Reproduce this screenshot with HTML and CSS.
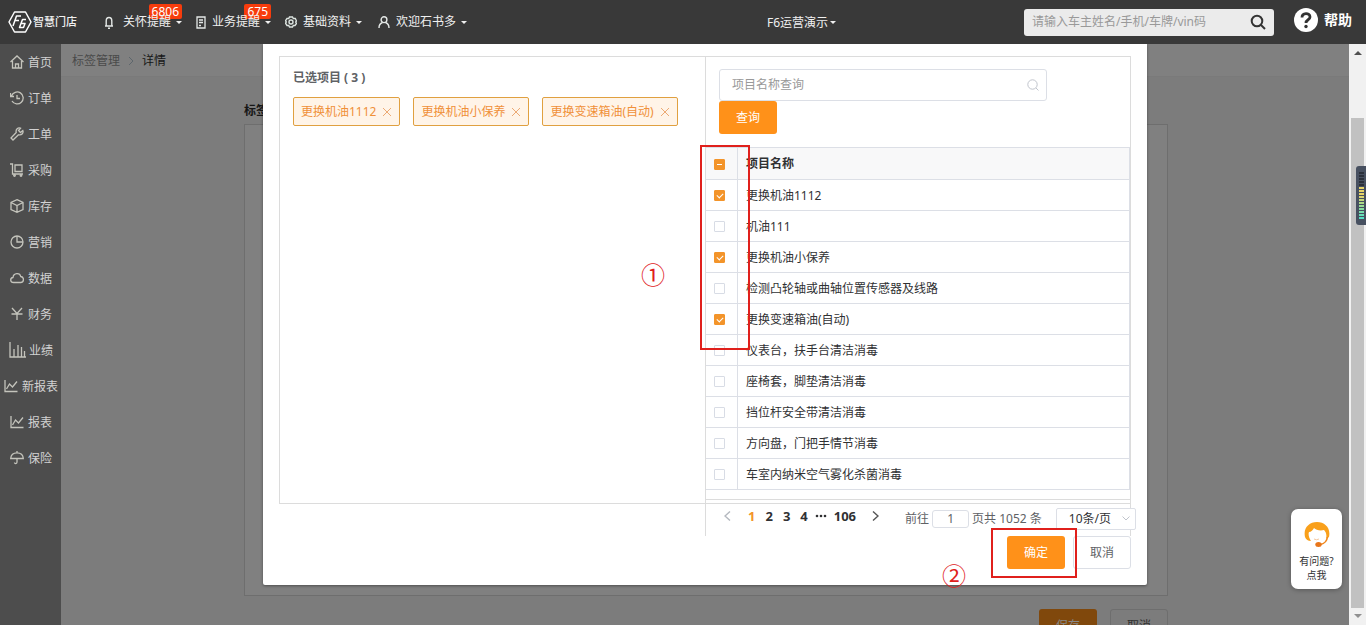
FILE: index.html
```html
<!DOCTYPE html>
<html lang="zh-CN">
<head>
<meta charset="utf-8">
<title>智慧门店</title>
<link rel="stylesheet" href="styles.css">
</head>
<body>
<header class="topbar">
  <a class="logo" href="#">
    <svg width="24" height="22" viewBox="0 0 24 22" fill="none" stroke="#fff" stroke-width="1.500" stroke-linejoin="round"><path d="M6.500 1h11L23 11l-5.500 10h-11L1 11z"/><path d="M13 5H8.500L5 15M7 9.500h4M18 8.500h-3.500L11.500 16.500h4l1.500-4h-4"/></svg>
    <span>智慧门店</span>
  </a>
  <nav class="menu">
    <a class="menu-item" href="#"><svg class="bell" width="10" height="13" viewBox="0 0 10 13" fill="none" stroke="#e4e8e6" stroke-width="1.400"><path d="M1 10h8M2.200 10V5c0-2 1-3.500 2.800-3.500S7.800 3 7.800 5v5M4 12.200h2"/></svg><span class="menu-text">关怀提醒</span><i class="caret"></i><b class="badge">6806</b></a>
    <a class="menu-item" href="#"><svg width="10" height="13" viewBox="0 0 10 13" fill="none" stroke="#e4e8e6" stroke-width="1.300"><path d="M1 1h8v11H1zM3 4h4M3 6.500h4M3 9.500h2"/></svg><span class="menu-text">业务提醒</span><i class="caret"></i><b class="badge">675</b></a>
    <a class="menu-item" href="#"><svg width="12" height="12" viewBox="0 0 12 12" fill="none" stroke="#dce4e0" stroke-width="1.400"><path d="M4.500 1h3l.800 1.500h2L11.500 5l-.800 1 .800 1.500-1.500 2H8.300L7.500 11h-3l-.800-1.500H2L.500 7.200 1.300 6 .500 4.700 2 2.500h1.700z"/><circle cx="6" cy="6" r="2"/></svg><span class="menu-text">基础资料</span><i class="caret"></i></a>
    <a class="menu-item" href="#"><svg width="14" height="12" viewBox="0 0 14 12" fill="none" stroke="#e4e8e6" stroke-width="1.400"><circle cx="8" cy="3.700" r="2.900"/><path d="M3 12c0-3 1.500-4.800 3.500-5.500M13 12c0-3-1.500-4.800-3.500-5.500"/></svg><span class="menu-text">欢迎石书多</span><i class="caret"></i></a>
  </nav>
  <a class="store" href="#">F6运营演示<i class="caret"></i></a>
  <form class="search">
    <input type="text" aria-label="搜索" placeholder="请输入车主姓名/手机/车牌/vin码">
    <button type="button" aria-label="搜索"><svg width="16" height="16" viewBox="0 0 16 16" fill="none" stroke="#333" stroke-width="2"><circle cx="7" cy="7" r="5.300"/><path d="M11 11l4 4"/></svg></button>
  </form>
  <a class="help" href="#"><svg width="24" height="24" viewBox="0 0 24 24"><circle cx="12" cy="12" r="12" fill="#fff"/><path d="M8 9.500c0-5 8-5 8-.500 0 3-4 2.500-4 6" fill="none" stroke="#333" stroke-width="2.800"/><circle cx="12" cy="18.500" r="1.700" fill="#333"/></svg><span>帮助</span></a>
</header>

<div class="layout">
  <nav class="sidebar">
    <a href="#"><svg viewBox="0 0 14 14"><path d="M.500 7L7 1l6.500 6M2.500 6v7h9V6M5.500 13V9h3v4"/></svg>首页</a>
    <a href="#"><svg viewBox="0 0 14 14"><path d="M1.500 5A6 6 0 1 1 2 10M.500 2v3.500H4M7 4v3.500h3"/></svg>订单</a>
    <a href="#"><svg viewBox="0 0 14 14"><path d="M12.800 3.500L10.500 5.500 8.500 3.500l2-2.300C8 .300 5.500 2 6.200 5.500L1 11l2 2 5.500-5.200c3.500.700 5.200-2 4.300-4.300z"/></svg>工单</a>
    <a href="#"><svg viewBox="0 0 14 14"><path d="M0 1h2.500v10H13M5 2h7v6.500H5z"/><circle cx="4.500" cy="12.500" r=".800"/><circle cx="11" cy="12.500" r=".800"/></svg>采购</a>
    <a href="#"><svg viewBox="0 0 14 14"><path d="M7 .700l6 2.800v7L7 13.300 1 10.500v-7zM1 3.500l6 3 6-3M7 6.500v7"/></svg>库存</a>
    <a href="#"><svg viewBox="0 0 14 14"><circle cx="7" cy="7" r="6"/><path d="M7 1v6h6"/></svg>营销</a>
    <a href="#"><svg viewBox="0 0 14 14"><path d="M3.500 11.500C0 11.500-.200 7 3 6.500 3.500 1.500 10 1.500 10.700 5.500c3.800.300 3.500 6 0 6z"/></svg>数据</a>
    <a href="#"><svg viewBox="0 0 14 14"><path d="M2 1l5 5.500L12 1M1.500 7h11M7 6.500V13"/></svg>财务</a>
    <a href="#"><svg class="wide" viewBox="0 0 17 16"><path d="M1 0v15h16M5 7v8M9 3v12M12.500 5v10M15.500 9v6"/></svg>业绩</a>
    <a href="#"><svg viewBox="0 0 14 14"><path d="M1 1v11.500h12.500M2.500 10L5.500 5l3 3L13 2.500"/></svg>新报表</a>
    <a href="#"><svg viewBox="0 0 14 14"><path d="M1 1v11.500h12.500M2.500 10L5.500 5l3 3L13 2.500"/></svg>报表</a>
    <a href="#"><svg viewBox="0 0 14 14"><path d="M.700 7.500C1 3.500 3.500 1.800 7 1.800s6 1.700 6.300 5.700zM7 0v2M7 7.500V11c0 2-2.500 2-2.500.500"/></svg>保险</a>
  </nav>

  <main class="main">
    <div class="crumbs"><a href="#">标签管理</a><svg width="6" height="10" viewBox="0 0 6 10" fill="none" stroke="#5d666c"><path d="M1 1l4 4-4 4"/></svg><span>详情</span></div>
    <section class="page">
      <h2>标签详情</h2>
      <div class="panel"></div>
      <div class="page-actions">
        <button type="button" class="btn btn-save">保存</button>
        <button type="button" class="btn btn-back">取消</button>
      </div>
    </section>

    <div class="overlay">
      <div class="dialog" role="dialog" aria-label="选择项目">
        <div class="picker">
          <section class="chosen">
            <h3>已选项目 ( 3 )</h3>
            <div class="tags">
              <span class="tag">更换机油1112<button type="button" aria-label="移除"><svg width="8" height="8" viewBox="0 0 8 8"><path d="M0 0l8 8M8 0L0 8"/></svg></button></span>
              <span class="tag">更换机油小保养<button type="button" aria-label="移除"><svg width="8" height="8" viewBox="0 0 8 8"><path d="M0 0l8 8M8 0L0 8"/></svg></button></span>
              <span class="tag">更换变速箱油(自动)<button type="button" aria-label="移除"><svg width="8" height="8" viewBox="0 0 8 8"><path d="M0 0l8 8M8 0L0 8"/></svg></button></span>
            </div>
          </section>
          <section class="source">
            <div class="filter">
              <label class="query"><input type="text" aria-label="项目名称查询" placeholder="项目名称查询"><svg width="12" height="12" viewBox="0 0 12 12" fill="none" stroke="#c0c4cc"><circle cx="5.500" cy="5.500" r="4.700"/><path d="M9 9l2.500 2.500"/></svg></label>
              <button type="button" class="btn btn-primary">查询</button>
            </div>
            <div class="table-wrap">
              <table class="items">
                <thead><tr><th class="pick"><input type="checkbox" class="check partial" aria-label="全选"></th><th>项目名称</th></tr></thead>
                <tbody>
                  <tr><td class="pick"><input type="checkbox" class="check" id="i1" checked></td><td><label for="i1">更换机油1112</label></td></tr>
                  <tr><td class="pick"><input type="checkbox" class="check" id="i2"></td><td><label for="i2">机油111</label></td></tr>
                  <tr><td class="pick"><input type="checkbox" class="check" id="i3" checked></td><td><label for="i3">更换机油小保养</label></td></tr>
                  <tr><td class="pick"><input type="checkbox" class="check" id="i4"></td><td><label for="i4">检测凸轮轴或曲轴位置传感器及线路</label></td></tr>
                  <tr><td class="pick"><input type="checkbox" class="check" id="i5" checked></td><td><label for="i5">更换变速箱油(自动)</label></td></tr>
                  <tr><td class="pick"><input type="checkbox" class="check" id="i6"></td><td><label for="i6">仪表台，扶手台清洁消毒</label></td></tr>
                  <tr><td class="pick"><input type="checkbox" class="check" id="i7"></td><td><label for="i7">座椅套，脚垫清洁消毒</label></td></tr>
                  <tr><td class="pick"><input type="checkbox" class="check" id="i8"></td><td><label for="i8">挡位杆安全带清洁消毒</label></td></tr>
                  <tr><td class="pick"><input type="checkbox" class="check" id="i9"></td><td><label for="i9">方向盘，门把手情节消毒</label></td></tr>
                  <tr><td class="pick"><input type="checkbox" class="check" id="i10"></td><td><label for="i10">车室内纳米空气雾化杀菌消毒</label></td></tr>
                </tbody>
              </table>
            </div>
          </section>
          <div class="pager">
            <button type="button" class="arrow" aria-label="上一页"><svg width="7" height="10" viewBox="0 0 7 10" fill="none" stroke="#b4b8bf" stroke-width="1.400"><path d="M6 .500L1 5l5 4.500"/></svg></button>
            <div class="pages">
              <button type="button" class="current">1</button><button type="button">2</button><button type="button">3</button><button type="button">4</button><svg width="12" height="4" viewBox="0 0 12 4" fill="#303133"><circle cx="2" cy="2" r="1.300"/><circle cx="6" cy="2" r="1.300"/><circle cx="10" cy="2" r="1.300"/></svg><button type="button">106</button>
            </div>
            <button type="button" class="arrow" aria-label="下一页"><svg width="7" height="10" viewBox="0 0 7 10" fill="none" stroke="#555" stroke-width="1.400"><path d="M1 .500L6 5 1 9.500"/></svg></button>
            <div class="jump">
              <label for="goto">前往</label><input type="text" id="goto" value="1"><span>页共 1052 条</span>
            </div>
            <div class="size"><select aria-label="每页条数"><option>10条/页</option></select><svg width="8" height="5" viewBox="0 0 8 5" fill="none" stroke="#c0c4cc"><path d="M.500.500L4 4 7.500.500"/></svg></div>
          </div>
        </div>
        <div class="actions">
          <button type="button" class="btn btn-primary">确定</button>
          <button type="button" class="btn btn-plain">取消</button>
        </div>
        <div class="mark mark-list"></div>
        <div class="mark mark-ok"></div>
        <span class="step step-1">①</span>
        <span class="step step-2">②</span>
      </div>
    </div>

    <a class="service" href="#">
      <svg width="26" height="26" viewBox="0 0 26 26"><path d="M1 15C-1 6 5 0 13 0s14 6 12 15l-3 2c1-4 0-7-2-9-4 1-8 0-10-2-1 2-3 4-5 4-1 2 0 6 2 9-3 0-5-1.500-6-4z" fill="#f9a01b"/><path d="M23.500 15c-.500 4-3 6.500-7 7.500" fill="none" stroke="#f0861b" stroke-width="1.500"/><ellipse cx="14.500" cy="22.500" rx="3.200" ry="2.500" fill="#e8761b"/><path d="M10 17q2.500 1.500 5 0" fill="none" stroke="#f5c9a0"/></svg>
      <span>有问题?</span><span>点我</span>
    </a>
  </main>

  <div class="scrollbar">
    <i class="up"></i>
    <div class="track"><div class="thumb"></div></div>
    <i class="down"></i>
    <div class="meter"><i></i></div>
  </div>
</div>
</body>
</html>
```
FILE: styles.css
```css
* { box-sizing: border-box; }
body {
  margin: 0;
  height: 100vh;
  overflow: hidden;
  display: flex;
  flex-direction: column;
  font: 12px/18px "Noto Sans", "Noto Sans CJK SC", sans-serif;
  color: #303133;
}
a { color: inherit; text-decoration: none; }
button, input, select { font: inherit; color: inherit; margin: 0; padding: 0; }
button { border: 0; background: none; }
svg { flex: none; display: block; }
h2, h3 { margin: 0; font-size: 12px; }

/* top bar */
.topbar {
  flex: none;
  height: 44px;
  display: flex;
  align-items: center;
  padding: 0 14px 0 8px;
  background: #393939;
  color: #f0f0f0;
  white-space: nowrap;
}
.logo { display: flex; align-items: center; gap: 1px; font-size: 11px; font-weight: 500; margin-right: 27px; }
.menu { display: flex; gap: 14px; }
.menu-item { position: relative; display: flex; align-items: center; gap: 6px; }
.menu-item .caret { margin-left: -1px; }
.bell { margin-right: 3px; }
.menu-text { position: relative; z-index: 1; }
.caret { flex: none; border: 3px solid transparent; border-top-color: #f0f0f0; border-bottom: 0; }
.badge {
  position: absolute;
  right: 0;
  top: -9px;
  padding: 0 3px;
  border-radius: 2px;
  background: #f73c0c;
  color: #fff;
  font-weight: 400;
  line-height: 15px;
}
.store { display: flex; align-items: center; gap: 2px; margin-left: auto; margin-right: 188px; padding-top: 1px; }
.search {
  display: flex;
  align-items: center;
  width: 250px;
  height: 27px;
  padding: 0 8px;
  border-radius: 3px;
  background: #ebebeb;
}
.search input { flex: 1; min-width: 0; border: 0; background: none; outline: 0; }
.search input::placeholder { color: #999; }
.help { display: flex; align-items: center; gap: 6px; margin-left: 20px; font-size: 14px; font-weight: 700; color: #fff; padding-bottom: 4px; }

/* frame */
.layout { flex: 1; min-height: 0; display: flex; }
.sidebar { flex: none; width: 61px; background: #4d4d4d; color: #d2d2d2; white-space: nowrap; }
.sidebar a { display: flex; align-items: center; justify-content: center; gap: 4px; height: 36px; padding: 1px 0 0 1px; }
.sidebar svg { width: 14px; height: 14px; margin-bottom: 2px; fill: none; stroke: #c4c4bc; stroke-width: 1.3; }
.sidebar .wide { width: 17px; height: 16px; margin-right: -1px; }
.main { position: relative; flex: 1; min-width: 0; overflow: hidden; background: #7c7c7c; }
.crumbs {
  display: flex;
  align-items: center;
  gap: 8px;
  height: 33px;
  padding: 2px 11px 0;
  background: #808080;
  border-bottom: 1px solid #7a7a7a;
  color: #161616;
}
.crumbs a { color: #4a4a4a; }
.page { width: 926px; max-width: 100%; margin: 0 auto; padding: 25px 0 0 2px; color: #161616; }
.panel { height: 472px; margin-top: 4px; border: 1px solid #6e6e6e; background: #808080; }
.page-actions { display: flex; justify-content: flex-end; gap: 13px; padding-top: 13px; }

/* buttons */
.btn { width: 58px; height: 33px; border-radius: 3px; }
.btn-primary { background: #ff9119; color: #fff; }
.btn-plain { background: #fff; border: 1px solid #dcdfe6; color: #606266; }
.btn-save { background: #80480c; color: #888; }
.btn-back { border: 1px solid #6e6e6e; color: #303030; }

/* dialog */
.overlay { position: absolute; top: 0; left: 0; right: 0; display: flex; justify-content: center; }
.dialog {
  position: relative;
  width: 884px;
  padding: 12px 16px 16px;
  background: #fff;
  border-radius: 0 0 2px 2px;
  box-shadow: 0 1px 3px rgba(0, 0, 0, 0.4);
}
.picker { display: grid; grid-template-columns: minmax(0, 1fr) minmax(0, 1fr); }
.chosen { padding: 12px 13px; border: 1px solid #dcdcdc; border-right: 0; }
.chosen h3 { color: #606266; }
.tags { display: flex; gap: 13px; margin-top: 10px; white-space: nowrap; }
.tag {
  display: flex;
  align-items: center;
  gap: 7px;
  height: 29px;
  padding: 0 8px 0 7px;
  border: 1px solid #e0a040;
  border-radius: 2px;
  background: #fff4e8;
  color: #f09038;
}
.tag path { stroke: #ecaa74; }
.source { border: 1px solid #dcdcdc; padding-bottom: 3px; }
.filter { padding: 12px 13px 13px; }
.query {
  display: flex;
  align-items: center;
  width: 328px;
  height: 32px;
  padding: 0 7px 0 12px;
  border: 1px solid #dcdfe6;
  border-radius: 3px;
}
.query input { flex: 1; min-width: 0; border: 0; outline: 0; }
.query input::placeholder { color: #999; }
.filter .btn { display: block; }
.table-wrap { padding-bottom: 9px; border-top: 1px solid #dcdfe6; border-bottom: 1px solid #dcdcdc; }
.items { width: 100%; border-collapse: separate; border-spacing: 0; border-right: 1px solid #dcdfe6; }
.items th, .items td { height: 31px; padding: 1px 8px 0; text-align: left; border-bottom: 1px solid #dcdfe6; }
.items th { height: 32px; background: #f8f8f9; }
.items .pick { width: 32px; border-right: 1px solid #dcdfe6; }
.check {
  appearance: none;
  display: block;
  position: relative;
  width: 11px;
  height: 11px;
  border: 1px solid #d8dce5;
  border-radius: 1px;
  background: #fff;
}
.check:checked, .partial { border-color: #f3942a; background: #f3942a; }
.check:checked::after {
  content: "";
  position: absolute;
  left: 3px;
  top: 1px;
  width: 3px;
  height: 5px;
  border: solid #fff;
  border-width: 0 1px 1px 0;
  transform: rotate(45deg);
}
.partial::after { content: ""; position: absolute; left: 2px; right: 2px; top: 4px; height: 1px; background: #fff; }

/* pager */
.pager {
  grid-column: 2;
  display: flex;
  align-items: center;
  height: 32px;
  padding-left: 18px;
  padding-bottom: 3px;
  border: solid #dcdcdc;
  border-width: 0 1px;
  white-space: nowrap;
}
.pages { display: flex; align-items: center; gap: 10px; margin: 0 16px 5px 17px; font-size: 13px; font-weight: 700; }
.pages svg { margin: 0 -3px; }
.pages .current { color: #f3942a; }
.arrow { padding-bottom: 5px; }
.jump { display: flex; align-items: center; gap: 3px; margin-left: 26px; padding-top: 1px; color: #606266; }
.jump input { width: 37px; height: 18px; border: 1px solid #dcdfe6; border-radius: 3px; text-align: center; }
.size { position: relative; flex: none; margin-left: 14px; }
.size select {
  appearance: none;
  display: block;
  width: 80px;
  height: 22px;
  padding: 0 12px;
  border: 1px solid #dcdfe6;
  border-radius: 2px;
  background: #fff;
}
.size svg { position: absolute; right: 6px; top: 8px; }
.actions { display: flex; justify-content: flex-end; gap: 8px; }

/* guide marks over the dialog */
.mark { position: absolute; border: 2px solid #e0201c; pointer-events: none; }
.mark-list { left: 437px; top: 101px; width: 50px; height: 205px; }
.mark-ok { left: 728px; top: 484px; width: 86px; height: 50px; }
.step { position: absolute; font: 24px/24px "Noto Sans CJK SC", sans-serif; color: #e0201c; }
.step-1 { left: 378px; top: 218px; }
.step-2 { left: 679px; top: 519px; }

.service {
  position: absolute;
  right: 7px;
  bottom: 36px;
  width: 51px;
  height: 80px;
  display: flex;
  flex-direction: column;
  align-items: center;
  padding-top: 13px;
  border-radius: 7px;
  background: #fff;
  box-shadow: 0 1px 5px rgba(0, 0, 0, 0.3);
  font-size: 10px;
  line-height: 14px;
}
.service svg { margin-bottom: 6px; }

/* scroll bar */
.scrollbar { position: relative; flex: none; width: 17px; display: flex; flex-direction: column; align-items: center; background: #f1f1f1; }
.track { flex: 1; width: 13px; padding-top: 57px; display: flex; }
.thumb { flex: 1; background: #c1c1c1; }
.up, .down { border: 4px solid transparent; margin: 6px 0; }
.up { border-bottom-color: #505050; border-top-width: 1px; }
.down { border-top-color: #909090; border-bottom-width: 1px; }
.meter {
  position: absolute;
  right: 0;
  top: 122px;
  width: 10px;
  height: 59px;
  padding: 6px 2px 6px 3px;
  border-radius: 3px 0 0 3px;
  background: #475060;
}
.meter i {
  display: block;
  height: 100%;
  background:
    repeating-linear-gradient(transparent 0 2px, #475060 2px 3px),
    linear-gradient(#2b303a 0 30%, #e6d368 30% 50%, #9fdc90 70%, #50e0c8);
}
```
